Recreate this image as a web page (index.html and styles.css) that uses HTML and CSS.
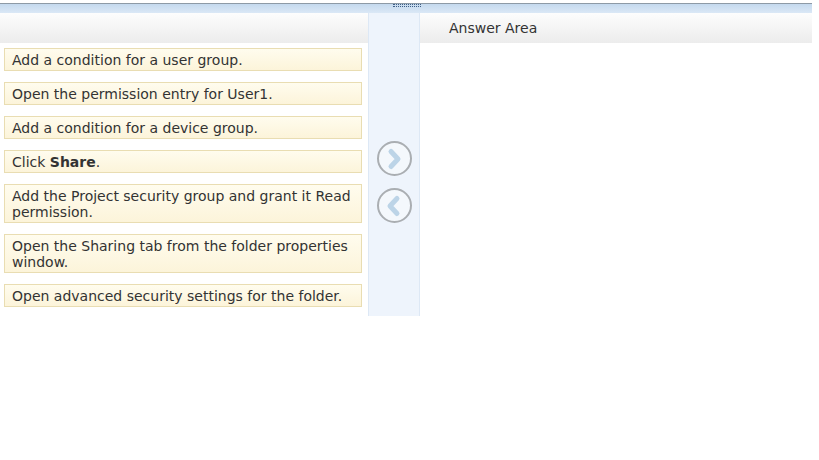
FILE: index.html
```html
<!DOCTYPE html>
<html lang="en">
<head>
    <meta charset="UTF-8">
    <meta name="viewport" content="width=device-width, initial-scale=1.0">
    <title>Answer Area</title>
    <link rel="stylesheet" href="styles.css">
</head>
<body>
    <div class="question">
        <div class="topbar">
            <span class="grip"></span>
        </div>
        <div class="columns">
            <section class="source">
                <div class="col-head"></div>
                <div class="items">
                    <div class="item">Add a condition for a user group.</div>
                    <div class="item">Open the permission entry for User1.</div>
                    <div class="item">Add a condition for a device group.</div>
                    <div class="item">Click <b>Share</b>.</div>
                    <div class="item">Add the Project security group and grant it Read permission.</div>
                    <div class="item">Open the Sharing tab from the folder properties window.</div>
                    <div class="item">Open advanced security settings for the folder.</div>
                </div>
            </section>

            <div class="mover">
                <button class="move" title="Move right">
                    <svg width="24" height="24" viewBox="0 0 24 24"><path d="M9 4.5 L16 12 L9 19.5" fill="none" stroke="#bcd4e7" stroke-width="5" stroke-linejoin="round" stroke-linecap="round"/></svg>
                </button>
                <button class="move" title="Move left">
                    <svg width="24" height="24" viewBox="0 0 24 24"><path d="M15 4.5 L8 12 L15 19.5" fill="none" stroke="#bcd4e7" stroke-width="5" stroke-linejoin="round" stroke-linecap="round"/></svg>
                </button>
            </div>

            <section class="answer">
                <div class="col-head">Answer Area</div>
            </section>
        </div>
    </div>
</body>
</html>
```

FILE: styles.css
```css
/* Общие стили */
body {
    margin: 0;
    font-family: Verdana, "DejaVu Sans", sans-serif;
    font-size: 14px;
    color: #333;
    background: #fff;
}

.question {
    width: 812px;
}

/* Верхняя полоса с ручкой */
.topbar {
    height: 9px;
    margin-top: 3px;
    border-top: 1px solid #8d9aa6;
    background: linear-gradient(#c4d9ee, #dbe8f6);
    position: relative;
}

.grip {
    position: absolute;
    left: 393px;
    top: 0;
    width: 28px;
    height: 1px;
    border-top: 1px dotted #3f5f86;
    border-bottom: 1px dotted #3f5f86;
}

.columns {
    display: flex;
    align-items: stretch;
}

.col-head {
    height: 30px;
    background: linear-gradient(#fdfdfd, #ececec);
}

/* Левая колонка */
.source {
    width: 368px;
}

.items {
    display: flex;
    flex-direction: column;
    gap: 11px;
    padding: 5px 6px 9px 4px;
}

.item {
    line-height: 16px;
    padding: 3px 7px 2px;
    border: 1px solid #e9ddb2;
    background: linear-gradient(#fffcee, #fcf4da);
}

/* Средняя колонка с кнопками */
.mover {
    width: 50px;
    background: #eef4fc;
    border-left: 1px solid #dde8f5;
    border-right: 1px solid #dde8f5;
    display: flex;
    flex-direction: column;
    align-items: center;
    padding-top: 128px;
    gap: 12px;
}

.move {
    width: 35px;
    height: 35px;
    border-radius: 50%;
    border: 2px solid #aaaeb2;
    background: #f4f8fc;
    padding: 0;
    display: flex;
    align-items: center;
    justify-content: center;
}

/* Правая колонка */
.answer {
    flex: 1;
}

.answer .col-head {
    line-height: 30px;
    padding-left: 29px;
}
```
